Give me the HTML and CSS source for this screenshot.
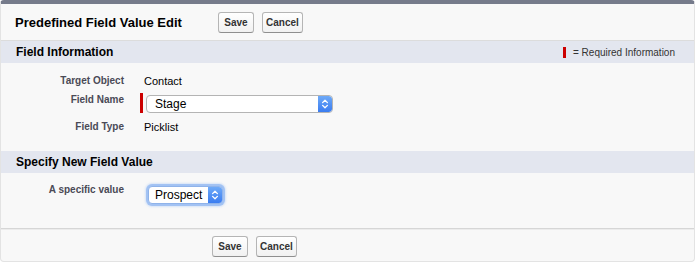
FILE: index.html
```html
<!DOCTYPE html>
<html lang="en">
<head>
<meta charset="utf-8">
<title>Predefined Field Value Edit</title>
<link rel="stylesheet" href="styles.css">
</head>
<body>
<div class="page-block">
  <div class="block-header">
    <h2 class="block-title">Predefined Field Value Edit</h2>
    <div class="btn-group">
      <button class="btn" type="button">Save</button>
      <button class="btn" type="button">Cancel</button>
    </div>
  </div>

  <div class="sub-header">
    <h3 class="sub-title">Field Information</h3>
    <span class="req-legend"><span class="req-mark"></span><span class="req-text">= Required Information</span></span>
  </div>
  <div class="detail-list detail-list--info">
    <div class="field-label">Target Object</div>
    <div class="field-value">Contact</div>

    <div class="field-label">Field Name</div>
    <div class="field-value field-value--required">
      <span class="req-bar"></span>
      <div class="select select--wide">
        <span class="select-text">Stage</span>
        <span class="select-arrow"><svg viewBox="0 0 8 14" width="8" height="14"><polyline points="1.6,5.6 4,3.2 6.4,5.6" fill="none" stroke="#fff" stroke-width="1.3" stroke-linecap="round" stroke-linejoin="round"/><polyline points="1.6,8.4 4,10.8 6.4,8.4" fill="none" stroke="#fff" stroke-width="1.3" stroke-linecap="round" stroke-linejoin="round"/></svg></span>
      </div>
    </div>

    <div class="field-label">Field Type</div>
    <div class="field-value">Picklist</div>
  </div>

  <div class="sub-header">
    <h3 class="sub-title">Specify New Field Value</h3>
  </div>
  <div class="detail-list detail-list--value">
    <div class="field-label">A specific value</div>
    <div class="field-value field-value--select">
      <div class="select select--narrow select--focus">
        <span class="select-text">Prospect</span>
        <span class="select-arrow"><svg viewBox="0 0 8 14" width="8" height="14"><polyline points="1.6,5.6 4,3.2 6.4,5.6" fill="none" stroke="#fff" stroke-width="1.3" stroke-linecap="round" stroke-linejoin="round"/><polyline points="1.6,8.4 4,10.8 6.4,8.4" fill="none" stroke="#fff" stroke-width="1.3" stroke-linecap="round" stroke-linejoin="round"/></svg></span>
      </div>
    </div>
  </div>

  <div class="block-footer">
    <div class="btn-group">
      <button class="btn" type="button">Save</button>
      <button class="btn" type="button">Cancel</button>
    </div>
  </div>
</div>
</body>
</html>
```

FILE: styles.css
```css
* { box-sizing: border-box; }

body {
  margin: 0;
  background: #ffffff;
  font-family: "Liberation Sans", Arial, Helvetica, sans-serif;
  color: #000;
}

.page-block {
  width: 695px;
  background: #f8f8f8;
  border: 1px solid #e3e3e3;
  border-top: 4px solid #767b8b;
  border-radius: 4px;
}

.block-header {
  display: flex;
  align-items: center;
  padding: 8px 0 7px 14px;
  border-bottom: 1px solid #dcdcdc;
}

.block-title {
  margin: 0;
  width: 203px;
  flex-shrink: 0;
  font-size: 13px;
  font-weight: bold;
  line-height: 21px;
  color: #000;
}

.btn-group {
  display: flex;
  gap: 8px;
}

.btn {
  height: 21px;
  min-width: 36px;
  padding: 0 3px;
  font-family: "Liberation Sans", Arial, Helvetica, sans-serif;
  font-size: 10px;
  font-weight: bold;
  color: #333;
  background: linear-gradient(#ffffff, #f1f1f1);
  border: 1px solid #b5b5b5;
  border-bottom-color: #8f8f8f;
  border-radius: 3px;
}

.sub-header {
  display: flex;
  align-items: center;
  justify-content: space-between;
  height: 22px;
  padding: 0 19px 0 15px;
  background: #e3e6ef;
}

.sub-title {
  margin: 0;
  font-size: 12px;
  font-weight: bold;
  color: #000;
}

.req-legend {
  display: flex;
  align-items: center;
  gap: 7px;
  font-size: 10px;
  color: #333;
}

.req-mark {
  width: 3px;
  height: 11px;
  background: #c00;
}

.detail-list {
  display: grid;
  grid-template-columns: 123px 1fr;
  column-gap: 16px;
  align-items: start;
}

.detail-list--info {
  grid-template-rows: 16px 22px 16px;
  row-gap: 4px;
  padding: 10px 0 16px;
}

.detail-list--value {
  grid-template-rows: 21px;
  padding: 10px 0 24px;
}

.field-label {
  font-size: 10px;
  font-weight: bold;
  line-height: 14px;
  color: #4a4a56;
  text-align: right;
}

.detail-list--info .field-label:first-child,
.detail-list--info .field-label:nth-child(5) {
  line-height: 16px;
}

.field-value {
  font-size: 11px;
  line-height: 16px;
  padding-left: 4px;
}

.field-value--required {
  display: flex;
  align-items: flex-start;
  gap: 3px;
  padding-left: 0;
}

.field-value--select {
  padding: 3px 0 0 8px;
}

.req-bar {
  width: 3px;
  height: 20px;
  background: #c00;
}

.select {
  display: flex;
  align-items: stretch;
  height: 18px;
  margin-top: 2px;
  background: #fff;
  border: 1px solid #b4b4b4;
  border-radius: 4px;
  overflow: hidden;
}

.select--wide { width: 187px; }

.select--narrow {
  width: 75px;
  margin-top: 0;
}

.select--focus {
  border-color: #8fb3ea;
  box-shadow: 0 0 0 2px rgba(120, 168, 240, 0.55), 0 0 2px 3px rgba(150, 190, 245, 0.35);
  overflow: visible;
}

.select-text {
  flex: 1;
  padding-left: 8px;
  font-size: 12px;
  line-height: 16px;
  color: #000;
}

.select--narrow .select-text { padding-left: 6px; }

.select-arrow {
  width: 14px;
  display: flex;
  align-items: center;
  justify-content: center;
  background: linear-gradient(#6eaaf8, #3a7cf0);
  border-radius: 0 3px 3px 0;
}

.block-footer {
  border-top: 1px solid #d6d6d6;
  box-shadow: inset 0 1px 0 #ececec;
  padding: 7px 0 4px 211px;
}
```
